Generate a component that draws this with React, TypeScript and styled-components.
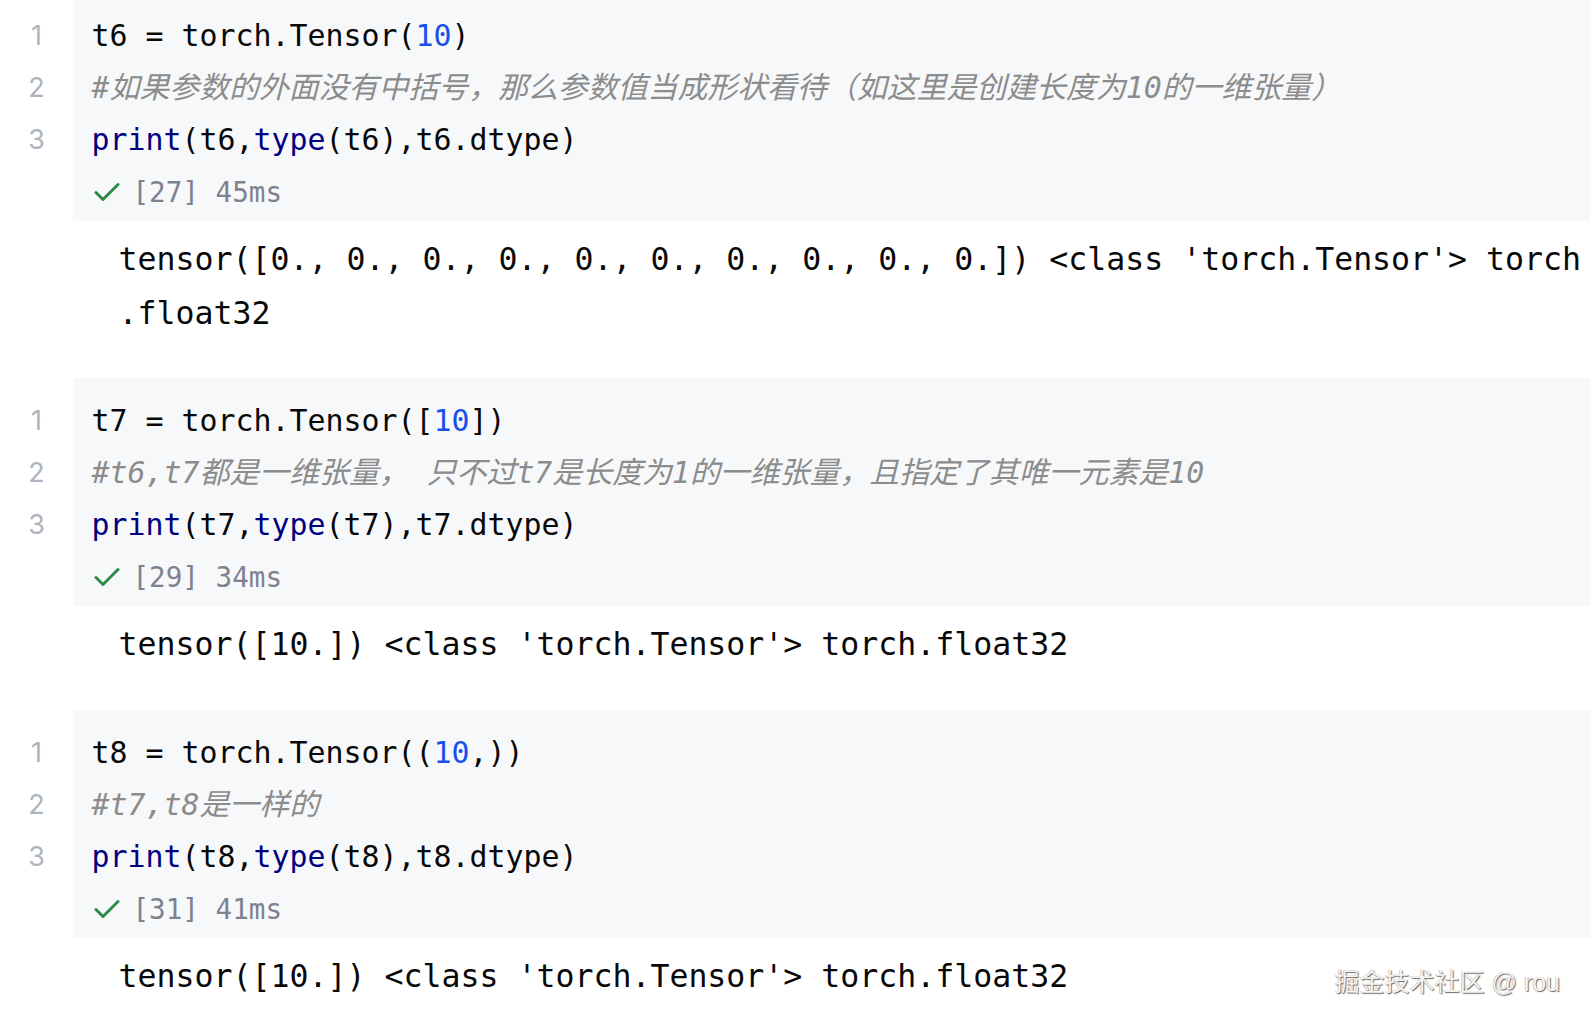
import React from "react";
import styled, { createGlobalStyle } from "styled-components";

const GlobalStyle = createGlobalStyle`
  html, body {
    margin: 0;
    padding: 0;
    background: #ffffff;
    overflow: hidden;
  }
  * { box-sizing: border-box; }
`;

const MONO = `"DejaVu Sans Mono", "Noto Sans CJK SC", monospace`;

type TokKind = "plain" | "builtin" | "number" | "comment";
type Tok = [TokKind, string];

interface CellData {
  lines: Tok[][];
  status: string;
  output: string;
}

const cells: CellData[] = [
  {
    lines: [
      [["plain", "t6 = torch.Tensor("], ["number", "10"], ["plain", ")"]],
      [["comment", "#如果参数的外面没有中括号，那么参数值当成形状看待（如这里是创建长度为10的一维张量）"]],
      [["builtin", "print"], ["plain", "(t6,"], ["builtin", "type"], ["plain", "(t6),t6.dtype)"]],
    ],
    status: "[27] 45ms",
    output:
      "tensor([0., 0., 0., 0., 0., 0., 0., 0., 0., 0.]) <class 'torch.Tensor'> torch.float32",
  },
  {
    lines: [
      [["plain", "t7 = torch.Tensor(["], ["number", "10"], ["plain", "])"]],
      [["comment", "#t6,t7都是一维张量， 只不过t7是长度为1的一维张量，且指定了其唯一元素是10"]],
      [["builtin", "print"], ["plain", "(t7,"], ["builtin", "type"], ["plain", "(t7),t7.dtype)"]],
    ],
    status: "[29] 34ms",
    output: "tensor([10.]) <class 'torch.Tensor'> torch.float32",
  },
  {
    lines: [
      [["plain", "t8 = torch.Tensor(("], ["number", "10"], ["plain", ",))"]],
      [["comment", "#t7,t8是一样的"]],
      [["builtin", "print"], ["plain", "(t8,"], ["builtin", "type"], ["plain", "(t8),t8.dtype)"]],
    ],
    status: "[31] 41ms",
    output: "tensor([10.]) <class 'torch.Tensor'> torch.float32",
  },
];

const Page = styled.div`
  position: relative;
  width: 1590px;
  height: 1026px;
  overflow: hidden;
  background: #ffffff;
`;

const Notebook = styled.div`
  display: flex;
  flex-direction: column;
  margin-top: -7px;
`;

const Cell = styled.section`
  display: flex;
  flex-direction: column;
`;

const InputRow = styled.div`
  display: grid;
  grid-template-columns: 73px 1fr;
`;

const Gutter = styled.div`
  display: flex;
  flex-direction: column;
  padding-top: 17px;
`;

const LineNo = styled.div`
  height: 52px;
  line-height: 52px;
  text-align: center;
  font-family: "Inter", "Noto Sans", sans-serif;
  font-size: 27px;
  color: #afb3bd;
`;

const CodeArea = styled.div`
  background: #f7f8fa;
  padding: 17px 0 3px 18.5px;
  display: flex;
  flex-direction: column;
`;

const CodeLine = styled.div`
  height: 52px;
  line-height: 52px;
  font-family: ${MONO};
  font-size: 29.9px;
  white-space: pre;
  color: #080808;
`;

const Token = styled.span<{ $kind: TokKind }>`
  color: ${(p) =>
    p.$kind === "builtin"
      ? "#000080"
      : p.$kind === "number"
      ? "#1750eb"
      : p.$kind === "comment"
      ? "#8c8c8c"
      : "#080808"};
  font-style: ${(p) => (p.$kind === "comment" ? "italic" : "normal")};
`;

const StatusLine = styled.div`
  height: 52px;
  display: flex;
  align-items: center;
  gap: 13px;
  padding-left: 2px;
`;

const StatusText = styled.span`
  font-family: ${MONO};
  font-size: 27.6px;
  color: #7e8290;
  white-space: pre;
`;

const Output = styled.div`
  padding: 12px 0 38px 118.6px;
`;

const OutputText = styled.div`
  width: calc(77ch + 8px);
  font-family: ${MONO};
  font-size: 31.55px;
  line-height: 53.7px;
  color: #080808;
  white-space: pre-wrap;
  word-break: break-all;
  line-break: anywhere;
`;

const Watermark = styled.div`
  position: absolute;
  right: 30px;
  bottom: 28px;
  font-family: "Liberation Sans", "Noto Sans CJK SC", sans-serif;
  font-size: 25px;
  color: #f4f4f4;
  text-shadow: 1px 1px 1px #6a6a6a, -0.5px -0.5px 0 #b0b0b0;
  white-space: pre;
`;

const Check = () => (
  <svg width="26" height="20" viewBox="0 0 26 20" fill="none">
    <path
      d="M2 10.5 L9 17.5 L24 2.5"
      stroke="#2e8b47"
      strokeWidth="3"
      strokeLinecap="round"
      strokeLinejoin="round"
    />
  </svg>
);

export default function App() {
  return (
    <Page>
      <GlobalStyle />
      <Notebook>
        {cells.map((c, ci) => (
          <Cell key={ci}>
            <InputRow>
              <Gutter>
                {c.lines.map((_, i) => (
                  <LineNo key={i}>{i + 1}</LineNo>
                ))}
              </Gutter>
              <CodeArea>
                {c.lines.map((line, li) => (
                  <CodeLine key={li}>
                    {line.map(([k, t], ti) => (
                      <Token key={ti} $kind={k}>
                        {t}
                      </Token>
                    ))}
                  </CodeLine>
                ))}
                <StatusLine>
                  <Check />
                  <StatusText>{c.status}</StatusText>
                </StatusLine>
              </CodeArea>
            </InputRow>
            <Output>
              <OutputText>{c.output}</OutputText>
            </Output>
          </Cell>
        ))}
      </Notebook>
      <Watermark>掘金技术社区 @ rou</Watermark>
    </Page>
  );
}
